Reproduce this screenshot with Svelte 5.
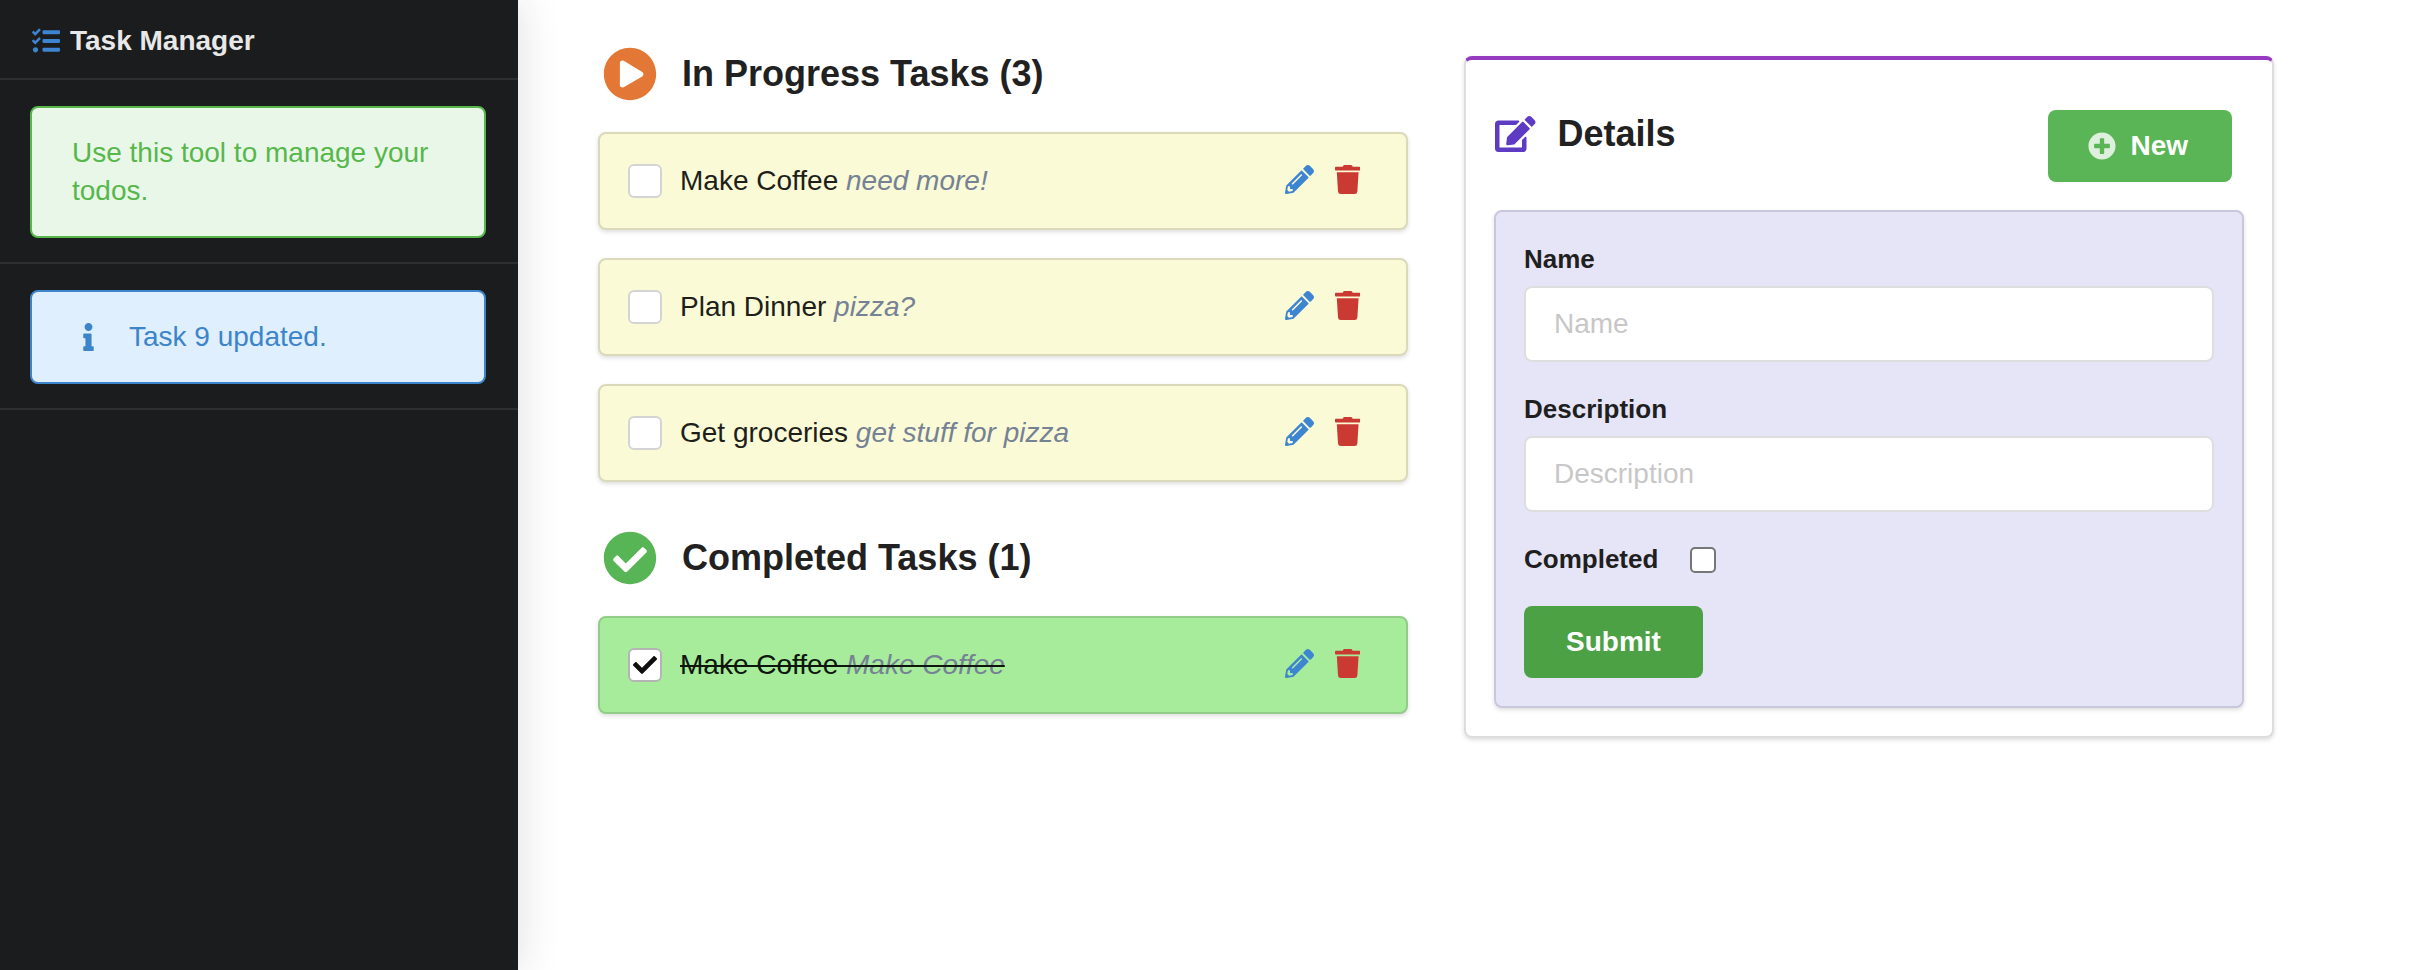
<script>
  const icons = {
    list: [512, 'M208 132h288c8.8 0 16-7.2 16-16V76c0-8.8-7.2-16-16-16H208c-8.8 0-16 7.2-16 16v40c0 8.8 7.2 16 16 16zm0 160h288c8.8 0 16-7.2 16-16v-40c0-8.8-7.2-16-16-16H208c-8.8 0-16 7.2-16 16v40c0 8.8 7.2 16 16 16zm0 160h288c8.8 0 16-7.2 16-16v-40c0-8.8-7.2-16-16-16H208c-8.8 0-16 7.2-16 16v40c0 8.8 7.2 16 16 16zM64 368c-26.5 0-48.6 21.5-48.6 48s22.1 48 48.6 48 48-21.5 48-48-21.5-48-48-48zM156.5 65.9l-72.2 72.2-15.6 15.6c-4.7 4.7-13 4.7-17.7 0L3.5 106.4c-4.7-4.7-4.7-12.3 0-17l15.7-15.7c4.7-4.7 12.3-4.7 17 0l22.7 22.1 63.7-63.3c4.7-4.7 12.3-4.7 17 0l17 16.5c4.6 4.7 4.6 12.3-.1 16.9zm0 159.6l-72.2 72.2-15.7 15.7c-4.7 4.7-12.9 4.7-17.6 0L3.5 266c-4.7-4.7-4.7-12.3 0-17l15.7-15.7c4.7-4.7 12.3-4.7 17 0l22.7 22.1 63.7-63.7c4.7-4.7 12.3-4.7 17 0l17 17c4.6 4.6 4.6 12.2-.1 16.8z'],
    info: [192, 'M20 424.229h20V279.771H20c-11.046 0-20-8.954-20-20V212c0-11.046 8.954-20 20-20h112c11.046 0 20 8.954 20 20v212.229h20c11.046 0 20 8.954 20 20V492c0 11.046-8.954 20-20 20H20c-11.046 0-20-8.954-20-20v-47.771c0-11.046 8.954-20 20-20zM96 0C56.235 0 24 32.235 24 72s32.235 72 72 72 72-32.235 72-72S135.764 0 96 0z'],
    play: [512, 'M371.7 238l-176-107c-15.8-8.8-35.7 2.5-35.7 21v208c0 18.4 19.8 29.8 35.7 21l176-101c16.4-9.1 16.4-32.8 0-42zM504 256C504 119 393 8 256 8S8 119 8 256s111 248 248 248 248-111 248-248z'],
    done: [512, 'M504 256c0 136.967-111.033 248-248 248S8 392.967 8 256 119.033 8 256 8s248 111.033 248 248zM227.314 387.314l184-184c6.248-6.248 6.248-16.379 0-22.627l-22.627-22.627c-6.248-6.249-16.379-6.249-22.628 0L216 308.118l-70.059-70.059c-6.248-6.248-16.379-6.248-22.628 0l-22.627 22.627c-6.248 6.248-6.248 16.379 0 22.627l104 104c6.249 6.249 16.379 6.249 22.628.001z'],
    plus: [512, 'M256 8C119 8 8 119 8 256s111 248 248 248 248-111 248-248S393 8 256 8zm144 276c0 6.6-5.4 12-12 12h-92v92c0 6.6-5.4 12-12 12h-56c-6.6 0-12-5.4-12-12v-92h-92c-6.6 0-12-5.4-12-12v-56c0-6.6 5.4-12 12-12h92v-92c0-6.6 5.4-12 12-12h56c6.6 0 12 5.4 12 12v92h92c6.6 0 12 5.4 12 12v56z'],
    edit: [576, 'M402.6 83.2l90.2 90.2c3.8 3.8 3.8 10 0 13.8L274.4 405.6l-92.8 10.3c-12.4 1.4-22.9-9.1-21.5-21.5l10.3-92.8L388.8 83.2c3.8-3.8 10-3.8 13.8 0zm162-22.9l-48.8-48.8c-15.2-15.2-39.9-15.2-55.2 0l-35.4 35.4c-3.8 3.8-3.8 10 0 13.8l90.2 90.2c3.8 3.8 10 3.8 13.8 0l35.4-35.4c15.2-15.3 15.2-40 0-55.2zM384 346.2V448H64V128h229.8c3.2 0 6.2-1.3 8.5-3.5l40-40c7.6-7.6 2.2-20.5-8.5-20.5H48C21.5 64 0 85.5 0 112v352c0 26.5 21.5 48 48 48h352c26.5 0 48-21.5 48-48V306.2c0-10.7-12.9-16-20.5-8.5l-40 40c-2.2 2.3-3.5 5.3-3.5 8.5z'],
    pencil: [512, 'M497.9 142.1l-46.1 46.1c-4.7 4.7-12.3 4.7-17 0l-111-111c-4.7-4.7-4.7-12.3 0-17l46.1-46.1c18.7-18.7 49.1-18.7 67.9 0l60.1 60.1c18.8 18.7 18.8 49.1 0 67.9zM284.2 99.8L21.6 362.4.4 483.9c-2.9 16.4 11.4 30.6 27.8 27.8l121.5-21.3 262.6-262.6c4.7-4.7 4.7-12.3 0-17l-111-111c-4.8-4.7-12.4-4.7-17.1 0zM124.1 339.9c-5.5-5.5-5.5-14.3 0-19.8l154-154c5.5-5.5 14.3-5.5 19.8 0s5.5 14.3 0 19.8l-154 154c-5.5 5.5-14.3 5.5-19.8 0zM88 424h48v36.3l-64.5 11.3-31.1-31.1L51.7 376H88v48z'],
    trash: [448, 'M432 32H312l-9.4-18.7A24 24 0 0 0 281.1 0H166.8a23.72 23.72 0 0 0-21.4 13.3L136 32H16A16 16 0 0 0 0 48v32a16 16 0 0 0 16 16h416a16 16 0 0 0 16-16V48a16 16 0 0 0-16-16zM53.2 467a48 48 0 0 0 47.9 45h245.8a48 48 0 0 0 47.9-45L416 128H32z'],
    check: [512, 'M173.898 439.404l-166.4-166.4c-9.997-9.997-9.997-26.206 0-36.204l36.203-36.204c9.997-9.998 26.207-9.998 36.204 0L192 312.69 432.095 72.596c9.997-9.997 26.207-9.997 36.204 0l36.203 36.204c9.997 9.997 9.997 26.206 0 36.204l-294.4 294.401c-9.998 9.997-26.207 9.997-36.204-.001z']
  };

  let tasks = $state([
    { id: 1, name: 'Make Coffee', description: 'need more!', completed: false },
    { id: 2, name: 'Plan Dinner', description: 'pizza?', completed: false },
    { id: 3, name: 'Get groceries', description: 'get stuff for pizza', completed: false },
    { id: 9, name: 'Make Coffee', description: 'Make Coffee', completed: true }
  ]);

  let active = $derived(tasks.filter((t) => !t.completed));
  let finished = $derived(tasks.filter((t) => t.completed));

  function remove(id) {
    tasks = tasks.filter((t) => t.id !== id);
  }
</script>

{#snippet icon(name)}
  <svg class="icon {name}" viewBox="0 0 {icons[name][0]} 512" aria-hidden="true">
    <path fill="currentColor" fill-rule="evenodd" d={icons[name][1]} />
  </svg>
{/snippet}

{#snippet list(items)}
  <ul class="tasks">
    {#each items as task (task.id)}
      <li class="task" class:completed={task.completed}>
        <label class="toggle">
          <span class="box">
            <input type="checkbox" bind:checked={task.completed} />
            {@render icon('check')}
          </span>
          <span class="text">{task.name} <em>{task.description}</em></span>
        </label>
        <div class="actions">
          <button type="button" aria-label="Edit">{@render icon('pencil')}</button>
          <button type="button" aria-label="Delete" onclick={() => remove(task.id)}>{@render icon('trash')}</button>
        </div>
      </li>
    {/each}
  </ul>
{/snippet}

<div class="app">
  <aside>
    <div class="item brand">{@render icon('list')}<b>Task Manager</b></div>
    <div class="item"><p class="message success">Use this tool to manage your todos.</p></div>
    <div class="item"><p class="message note">{@render icon('info')}<span>Task 9 updated.</span></p></div>
  </aside>

  <main>
    <div class="column">
      <section>
        <h2>{@render icon('play')}In Progress Tasks ({active.length})</h2>
        {@render list(active)}
      </section>
      <section>
        <h2>{@render icon('done')}Completed Tasks ({finished.length})</h2>
        {@render list(finished)}
      </section>
    </div>

    <section class="details">
      <header>
        <h2>{@render icon('edit')}Details</h2>
        <button type="button" class="button new">{@render icon('plus')}New</button>
      </header>
      <form onsubmit={(e) => e.preventDefault()}>
        <div class="field">
          <label for="name">Name</label>
          <input id="name" type="text" placeholder="Name" />
        </div>
        <div class="field">
          <label for="description">Description</label>
          <input id="description" type="text" placeholder="Description" />
        </div>
        <div class="field inline">
          <label for="completed">Completed</label>
          <input id="completed" type="checkbox" />
        </div>
        <button type="submit" class="button submit">Submit</button>
      </form>
    </section>
  </main>
</div>

<style>
  :global(body) {
    background: #fff;
  }

  .app,
  .app * {
    box-sizing: border-box;
  }

  .app {
    display: flex;
    min-height: 100vh;
    font-family: "Liberation Sans", Arial, Helvetica, sans-serif;
    font-size: 28px;
    line-height: 38px;
    color: #212121;
  }

  button,
  input {
    font: inherit;
  }

  .icon {
    display: block;
    flex: none;
    height: 28px;
  }

  aside {
    flex: none;
    width: 518px;
    background: #1b1c1d;
    box-shadow: 0 0 40px rgba(34, 36, 38, 0.15);
  }

  .item {
    padding: 26px 32px 24px 30px;
    border-bottom: 2px solid #2d2e2f;
  }

  .brand {
    display: flex;
    align-items: center;
    gap: 10px;
    height: 80px;
    padding: 4px 32px 0;
    color: #e8e8e8;
  }

  .icon.list {
    color: #3d85d0;
  }

  .message {
    margin: 0;
    padding: 26px 40px;
    border: 2px solid;
    border-radius: 8px;
  }

  .success {
    color: #57b74b;
    background: #e9f7e9;
  }

  .note {
    display: flex;
    align-items: center;
    color: #3d85ca;
    background: #e0effd;
  }

  .icon.info {
    width: 33px;
    margin-right: 24px;
  }

  main {
    flex: 1;
    min-width: 0;
    display: grid;
    grid-template-columns: 1fr 1fr;
    align-items: start;
    gap: 56px;
    padding: 47px 138px 56px 80px;
  }

  h2 {
    display: flex;
    align-items: center;
    margin: 0;
    font-size: 36px;
    line-height: 54px;
  }

  .column {
    display: grid;
    gap: 49px;
  }

  .column h2 {
    gap: 25px;
    padding-left: 5px;
  }

  .icon.play,
  .icon.done {
    height: 54px;
  }

  .icon.play {
    color: #e37836;
  }

  .icon.done {
    color: #58b555;
  }

  .tasks {
    display: grid;
    gap: 28px;
    margin: 31px 0 0;
    padding: 0;
    list-style: none;
  }

  .task {
    display: flex;
    align-items: center;
    justify-content: space-between;
    height: 98px;
    padding: 0 46px 0 28px;
    color: #1e1f1a;
    background: #fafad7;
    border: 2px solid #dadaba;
    border-radius: 8px;
    box-shadow: 0 2px 4px rgba(34, 36, 38, 0.15);
  }

  .completed {
    color: #0f160e;
    background: #a6ec9b;
    border-color: #91cd88;
  }

  .toggle {
    display: flex;
    align-items: center;
    gap: 18px;
  }

  .box {
    display: grid;
    place-items: center;
    width: 34px;
    height: 34px;
  }

  .box > :global(*) {
    grid-area: 1 / 1;
  }

  .box input {
    appearance: none;
    width: 34px;
    height: 34px;
    margin: 0;
    background: #fff;
    border: 2px solid #d4d4d5;
    border-radius: 6px;
  }

  .box input:checked {
    border-color: #b4b4b5;
  }

  .icon.check {
    height: 24px;
    color: #0f0f10;
    visibility: hidden;
    pointer-events: none;
  }

  .box input:checked + .icon.check {
    visibility: visible;
  }

  .completed .text {
    text-decoration: line-through;
    text-decoration-thickness: 2px;
  }

  em {
    color: #758294;
  }

  .actions {
    display: flex;
    gap: 21px;
    padding-bottom: 3px;
  }

  .actions button {
    padding: 0;
    color: #3d85d0;
    background: none;
    border: 0;
  }

  .icon.pencil,
  .icon.trash {
    height: 29px;
  }

  .icon.trash {
    color: #ca3a33;
  }

  .details {
    margin-top: 9px;
    padding: 50px 28px 28px;
    background: #fff;
    border: 2px solid #ddddde;
    border-top: 4px solid #963ac0;
    border-radius: 8px;
    box-shadow: 0 2px 4px rgba(34, 36, 38, 0.15);
  }

  header {
    display: flex;
    align-items: flex-start;
    justify-content: space-between;
    padding-right: 12px;
    margin-bottom: 28px;
  }

  header h2 {
    gap: 22px;
    padding-left: 1px;
  }

  .details h2 {
    line-height: 48px;
  }

  .icon.edit {
    height: 36px;
    color: #5e3bc3;
  }

  .button {
    display: flex;
    align-items: center;
    justify-content: center;
    height: 72px;
    padding: 0 42px;
    font-weight: bold;
    color: #fff;
    border: 0;
    border-radius: 8px;
  }

  .new {
    gap: 14px;
    padding: 0 44px 0 40px;
    background: #59b555;
  }

  .icon.plus {
    opacity: 0.8;
  }

  .submit {
    background: #4ca145;
  }

  form {
    padding: 28px;
    background: #e6e5f7;
    border: 2px solid #c9c7dc;
    border-radius: 8px;
    box-shadow: 0 2px 4px rgba(34, 36, 38, 0.15);
  }

  .field {
    margin-bottom: 28px;
  }

  .field label {
    display: block;
    margin-bottom: 8px;
    font-size: 26px;
    line-height: 38px;
    font-weight: bold;
    color: #1f1f21;
  }

  .field input[type='text'] {
    display: block;
    width: 100%;
    height: 76px;
    padding: 0 28px;
    color: #212121;
    background: #fff;
    border: 2px solid #dededf;
    border-radius: 8px;
  }

  .field input::placeholder {
    color: #c7c7c7;
    opacity: 1;
  }

  .field.inline {
    display: flex;
    align-items: center;
    gap: 32px;
  }

  .field.inline label {
    margin: 0;
  }

  .inline input {
    appearance: none;
    width: 26px;
    height: 26px;
    margin: 2px 0 0;
    background: #fff;
    border: 2px solid #767676;
    border-radius: 5px;
  }
</style>
